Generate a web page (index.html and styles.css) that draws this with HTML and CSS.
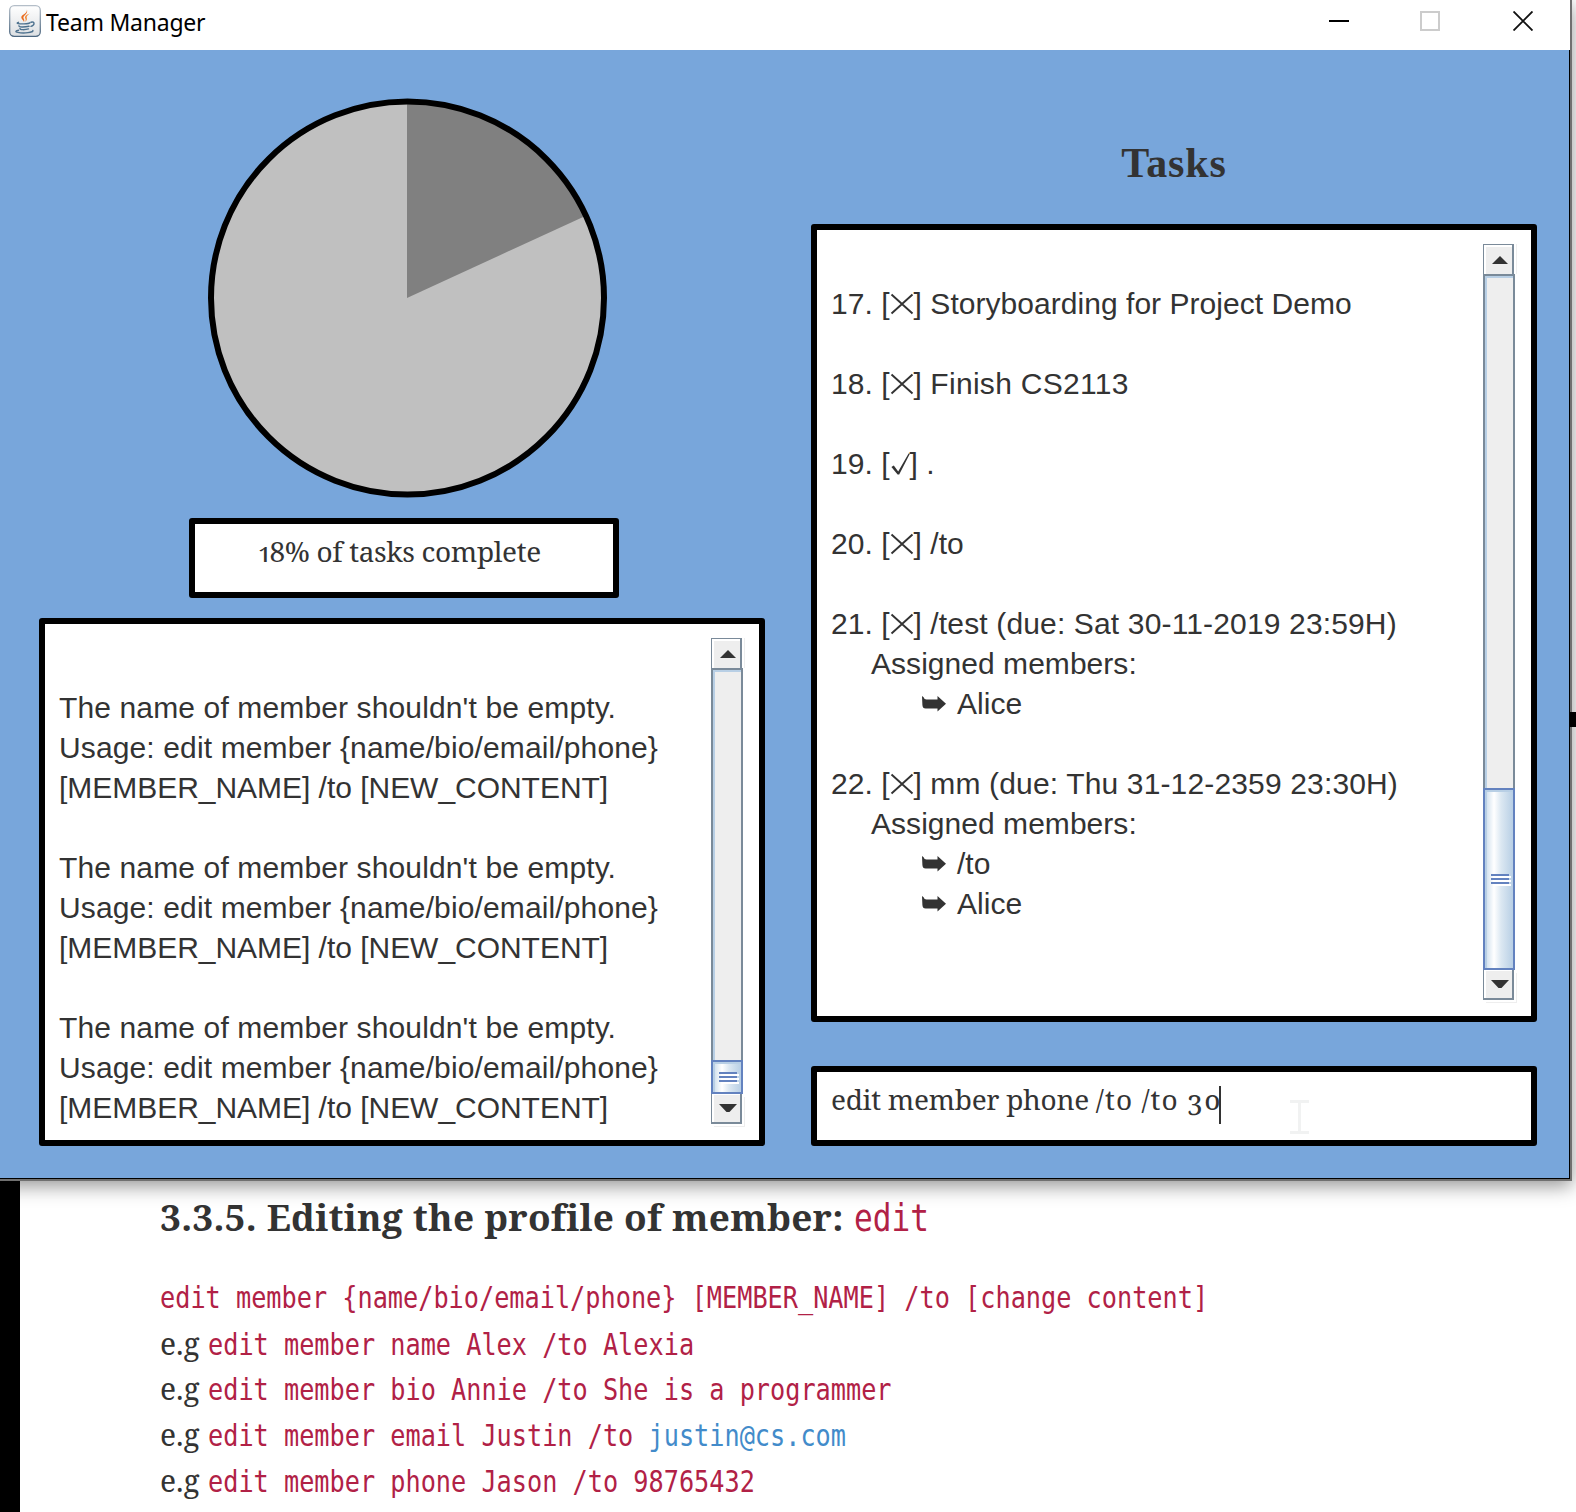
FILE: index.html
```html
<!DOCTYPE html>
<html lang="en">
<head>
<meta charset="utf-8">
<title>Team Manager</title>
<link rel="stylesheet" href="styles.css">
</head>
<body>
<svg class="defs" width="0" height="0" aria-hidden="true">
  <symbol id="cross" viewBox="0 0 24 22"><path d="M1.5 1.5 22.5 20.5M22.5 1.5 1.5 20.5" fill="none" stroke="#333" stroke-width="1.9"/></symbol>
  <symbol id="check" viewBox="0 0 20 22"><path d="M1.4 14 3.8 12.6 8.2 18.6 18.6 .6 20 .6 9.2 21.6 7.6 21.6Z" fill="#333"/></symbol>
  <symbol id="arrow" viewBox="0 0 24 16"><path d="M0 0 1.6 1.2Q2.2 3.400 4.5 3.400H15.500V0L24 7.800 15.500 15.600V12.600H3.600Q.6 12.600 .4 9Z" fill="#333"/></symbol>
  <symbol id="up" viewBox="0 0 16 8"><path d="M8 0 16 8H0Z" fill="#333"/></symbol>
  <symbol id="down" viewBox="0 0 18 8"><path d="M0 0H18L10.5 8H7.5Z" fill="#333"/></symbol>
</svg>

<div class="window">
  <header class="titlebar">
    <svg class="app-icon" viewBox="0 0 32 32">
      <defs><linearGradient id="tile" x1="0" y1="0" x2="0" y2="1"><stop offset="0" stop-color="#fff"/><stop offset="1" stop-color="#dcdfe2"/></linearGradient>
      <linearGradient id="edge" x1="0" y1="0" x2="0" y2="1"><stop offset="0" stop-color="#b4bec8"/><stop offset="1" stop-color="#4c6780"/></linearGradient></defs>
      <rect x=".7" y=".7" width="30.6" height="30.6" rx="4.5" fill="url(#tile)" stroke="url(#edge)" stroke-width="1.3"/>
      <path d="M17.8 4.5C19 8.500 12 9.500 12.300 12.500 12.500 14.300 14.500 15 15 17 16.200 14.500 13.800 13.500 14.500 12 15.300 10 19.500 8 17.800 4.500Z" fill="#ea6a1c"/>
      <path d="M20.800 8.500C17 9.500 15.700 11.300 16 12.800 16.300 14 17.300 14.500 16.200 16.800 19 14.800 17.500 13.200 17.700 12 17.900 10.500 19.300 9.700 20.800 8.500Z" fill="#f08a3a"/>
      <g fill="none" stroke="#4d718e" stroke-width="1.4" stroke-linecap="round">
        <path d="M9.500 17.300C6 18.500 10 19 15 18.900 18 18.800 20.500 18.400 21 17.800"/>
        <path d="M22 17.200C26 16.200 26 20 22 21.300"/>
        <path d="M10 20.800C9.500 22.300 15 22.300 20 21.300"/>
        <path d="M11 23.500C10.500 25 16 25 19.500 23.900"/>
        <path d="M9.500 25.300C2 26.800 12 28.600 19 27.600 22 27.200 24.500 26.500 23.800 25.500"/>
      </g>
    </svg>
    <span class="app-title">Team Manager</span>
    <div class="controls">
      <svg width="20" height="20" viewBox="0 0 20 20"><path d="M0 10H20" stroke="#000" stroke-width="2"/></svg>
      <svg width="20" height="20" viewBox="0 0 20 20"><rect x="1" y="1" width="18" height="18" fill="none" stroke="#ccc" stroke-width="2"/></svg>
      <svg class="close" width="20" height="20" viewBox="0 0 20 20"><path d="M.5.5 19.500 19.500M19.500.5.5 19.500" stroke="#111" stroke-width="1.900"/></svg>
    </div>
  </header>

  <main class="content">
    <section class="column">
      <svg class="pie" width="400" height="400" viewBox="0 0 400 400">
        <circle cx="199.500" cy="200" r="196.500" fill="#c0c0c0"/>
        <path d="M199 200V3.500A196.500 196.500 0 0 1 377.900 117.700Z" fill="#808080"/>
        <circle cx="199.500" cy="200" r="196.500" fill="none" stroke="#000" stroke-width="6"/>
      </svg>
      <div class="panel progress">18% of tasks complete</div>
      <div class="panel log">
        <div class="log-text">
          <p>The name of member shouldn't be empty.<br>Usage: edit member {name/bio/email/phone}<br><span class="caps">[MEMBER_NAME] /to [NEW_CONTENT]</span></p>
          <p>The name of member shouldn't be empty.<br>Usage: edit member {name/bio/email/phone}<br><span class="caps">[MEMBER_NAME] /to [NEW_CONTENT]</span></p>
          <p>The name of member shouldn't be empty.<br>Usage: edit member {name/bio/email/phone}<br><span class="caps">[MEMBER_NAME] /to [NEW_CONTENT]</span></p>
        </div>
        <div class="scrollbar">
          <div class="button"><svg width="16" height="8"><use href="#up"/></svg></div>
          <div class="track"></div>
          <div class="thumb thumb-short"><i></i><i></i><i></i></div>
          <div class="button button-down"><svg width="18" height="8"><use href="#down"/></svg></div>
        </div>
      </div>
    </section>

    <section class="column">
      <h1 class="heading">Tasks</h1>
      <div class="panel tasks">
        <div class="task-list">
          <p>17. [<svg class="cross"><use href="#cross"/></svg>] Storyboarding for Project Demo</p>
          <p>18. [<svg class="cross"><use href="#cross"/></svg>] <span class="wider">Finish CS2113</span></p>
          <p>19. [<svg class="check"><use href="#check"/></svg>] .</p>
          <p>20. [<svg class="cross"><use href="#cross"/></svg>] /to</p>
          <div class="task">
            <p>21. [<svg class="cross"><use href="#cross"/></svg>] <span class="wide">/test (due: Sat 30-11-2019 23:59H)</span></p>
            <p class="assigned">Assigned members:</p>
            <p class="member"><svg class="arrow"><use href="#arrow"/></svg>Alice</p>
          </div>
          <div class="task">
            <p>22. [<svg class="cross"><use href="#cross"/></svg>] <span class="wide">mm (due: Thu 31-12-2359 23:30H)</span></p>
            <p class="assigned">Assigned members:</p>
            <p class="member"><svg class="arrow"><use href="#arrow"/></svg>/to</p>
            <p class="member"><svg class="arrow"><use href="#arrow"/></svg>Alice</p>
          </div>
        </div>
        <div class="scrollbar">
          <div class="button"><svg width="16" height="8"><use href="#up"/></svg></div>
          <div class="track"></div>
          <div class="thumb thumb-long"><i></i><i></i><i></i></div>
          <div class="button button-down"><svg width="18" height="8"><use href="#down"/></svg></div>
        </div>
      </div>
      <div class="panel command">
        <span class="typed">edit member phone <span class="args">/to /to 30</span></span><span class="caret"></span>
        <svg class="ibeam" width="20" height="34" viewBox="0 0 20 34"><path d="M0 1.500H19M0 32.500H19M9.500 1.500V32.500" stroke="#f1f2f2" stroke-width="3"/></svg>
      </div>
    </section>
  </main>
</div>
<div class="page-mark"></div>

<article class="doc">
  <h2>3.3.5. Editing the profile of member:</h2><code class="big">edit</code>
  <div class="row"><code>edit member {name/bio/email/phone} [MEMBER_NAME] /to [change content]</code></div>
  <div class="row"><span class="eg">e.g</span><code>edit member name Alex /to Alexia</code></div>
  <div class="row"><span class="eg">e.g</span><code>edit member bio Annie /to She is a programmer</code></div>
  <div class="row"><span class="eg">e.g</span><code>edit member email Justin /to <a>justin@cs.com</a></code></div>
  <div class="row"><span class="eg">e.g</span><code>edit member phone Jason /to 98765432</code></div>
</article>
</body>
</html>
```
FILE: styles.css
```css
* { box-sizing: border-box; margin: 0; padding: 0; }
html, body { width: 1576px; height: 1512px; overflow: hidden; }
body { background: #fff; color: #333; position: relative; }
.defs { position: absolute; }
svg { display: block; flex: none; }

.window {
  width: 1572px;
  height: 1181px;
  border-right: 2px solid #707070;
  border-bottom: 2px solid #707070;
  box-shadow: 0 5px 18px rgba(0, 0, 0, .42);
  position: relative;
  z-index: 1;
}

.titlebar { height: 50px; background: #fff; display: flex; align-items: flex-start; padding: 5px 37px 0 9px; }
.app-icon { width: 32px; height: 32px; }
.app-title { margin-left: 5px; font: 23px/34px "Noto Sans", sans-serif; letter-spacing: -.22px; color: #000; white-space: nowrap; }
.controls { margin: 6px 0 0 auto; display: flex; gap: 71px; }
.close { margin-left: 2px; }

.content {
  height: 1129px;
  background: #78a6db;
  border-right: 1px solid #000;
  border-bottom: 1px solid #000;
  padding-left: 39px;
  display: flex;
  gap: 46px;
}
.column { width: 726px; display: flex; flex-direction: column; }
.panel { background: #fff; border: 6px solid #000; border-radius: 3px; }

.pie { margin: 48px 0 0 169px; }
.progress {
  width: 430px; height: 80px; margin: 20px 0 0 150px;
  font: 28px/36px "Noto Serif", "Liberation Serif", serif; text-align: center;
  font-variant-numeric: oldstyle-nums proportional-nums; letter-spacing: -.35px;
  padding: 9px 8px 0 0; white-space: nowrap;
}

.log { height: 528px; margin-top: 20px; padding: 14px 16px 0 14px; display: flex; justify-content: space-between; }
.log-text, .task-list { font: 30px/40px "Liberation Sans", Arial, sans-serif; white-space: nowrap; }
.log-text { letter-spacing: .13px; padding-top: 50px; height: 484px; }
.log-text p + p { margin-top: 40px; }
.caps { letter-spacing: -.03px; }
.wide { letter-spacing: .15px; }
.wider { letter-spacing: .3px; }

.heading { height: 174px; padding-top: 90px; text-align: center; font: bold 42px/46px "Liberation Serif", serif; letter-spacing: .9px; }
.tasks { height: 798px; padding: 14px 14px 0 14px; display: flex; justify-content: space-between; }
.tasks .scrollbar { margin-right: 2px; }
.task-list { padding-top: 40px; letter-spacing: .04px; display: flex; flex-direction: column; gap: 40px; }
.cross, .check { display: inline-block; vertical-align: -1px; height: 22px; }
.cross { width: 24px; }
.check { width: 20px; }
.assigned { padding-left: 40px; }
.member { padding-left: 91px; display: flex; align-items: center; gap: 11px; }
.arrow { width: 24px; height: 16px; }

.command { height: 80px; margin-top: 44px; padding: 14px 0 0 14px; display: flex; position: relative; }
.typed { width: 388px; font: 28px/36px "Noto Serif", "Liberation Serif", serif; font-variant-numeric: oldstyle-nums; letter-spacing: -.3px; white-space: pre; margin-top: -5px; }
.args { letter-spacing: 1.05px; }
.caret { width: 2px; height: 38px; background: #333; }
.ibeam { position: absolute; left: 473px; top: 28px; }

.scrollbar { width: 32px; display: flex; flex-direction: column; flex: none; }
.button {
  width: 31px; height: 30px; flex: none;
  background: #eee; border: 1px solid #7a8a99; border-right-width: 2px; border-bottom: 0;
  box-shadow: inset 2px 2px 0 #fff, 2px 0 0 #fff, 3px 0 0 #eee;
  display: flex; justify-content: center; padding: 11px 0 0 3px;
}
.button-down { height: 30px; border-top: 0; border-bottom: 2px solid #7a8a99; padding-top: 10px; box-shadow: inset 2px 1px 0 #fff, 2px 2px 0 #fff, 3px 3px 0 #eee; }
.track { background: #eee; border: 2px solid #7a8a99; border-bottom: 0; box-shadow: inset 2px 2px 0 #b8cfe5; }
.log .track { height: 392px; }
.tasks .track { height: 514px; }
.thumb {
  flex: none; border: 2px solid #6382bf;
  background: linear-gradient(90deg, #d5e3ef 2px, #fff 9px, #dce8f2 16px, #b8cfe5 28px);
  box-shadow: inset 2px 2px 0 #b8cfe5;
  display: flex; flex-direction: column; justify-content: center; align-items: flex-start; gap: 2px; padding-left: 6px;
}
.thumb-short { height: 34px; }
.thumb-long { height: 182px; }
.thumb i { width: 18px; height: 2px; background: #6382bf; box-shadow: 2px 2px 0 #fff; }

.page-mark { position: absolute; right: 0; top: 712px; width: 6px; height: 15px; background: #000; z-index: 2; }

.doc { height: 331px; border-left: 20px solid #000; padding: 12px 0 0 140px; white-space: nowrap; }
.doc h2 { display: inline-block; width: 694px; font: bold 37px/48px "Noto Serif", "DejaVu Serif Condensed", "DejaVu Serif", serif; letter-spacing: .24px; }
.doc code { display: inline-block; font: 30px/45px "DejaVu Sans Mono", monospace; color: #b12146; transform: scaleX(.841); transform-origin: left; }
.doc code.big { font-size: 37px; }
.row { display: flex; height: 45.700px; align-items: baseline; }
.doc h2 + code + .row { margin-top: 34px; }
.eg { width: 48px; font: 30px/45px "Noto Serif", "DejaVu Serif Condensed", "DejaVu Serif", serif; }
.doc a { color: #428bca; }
```
